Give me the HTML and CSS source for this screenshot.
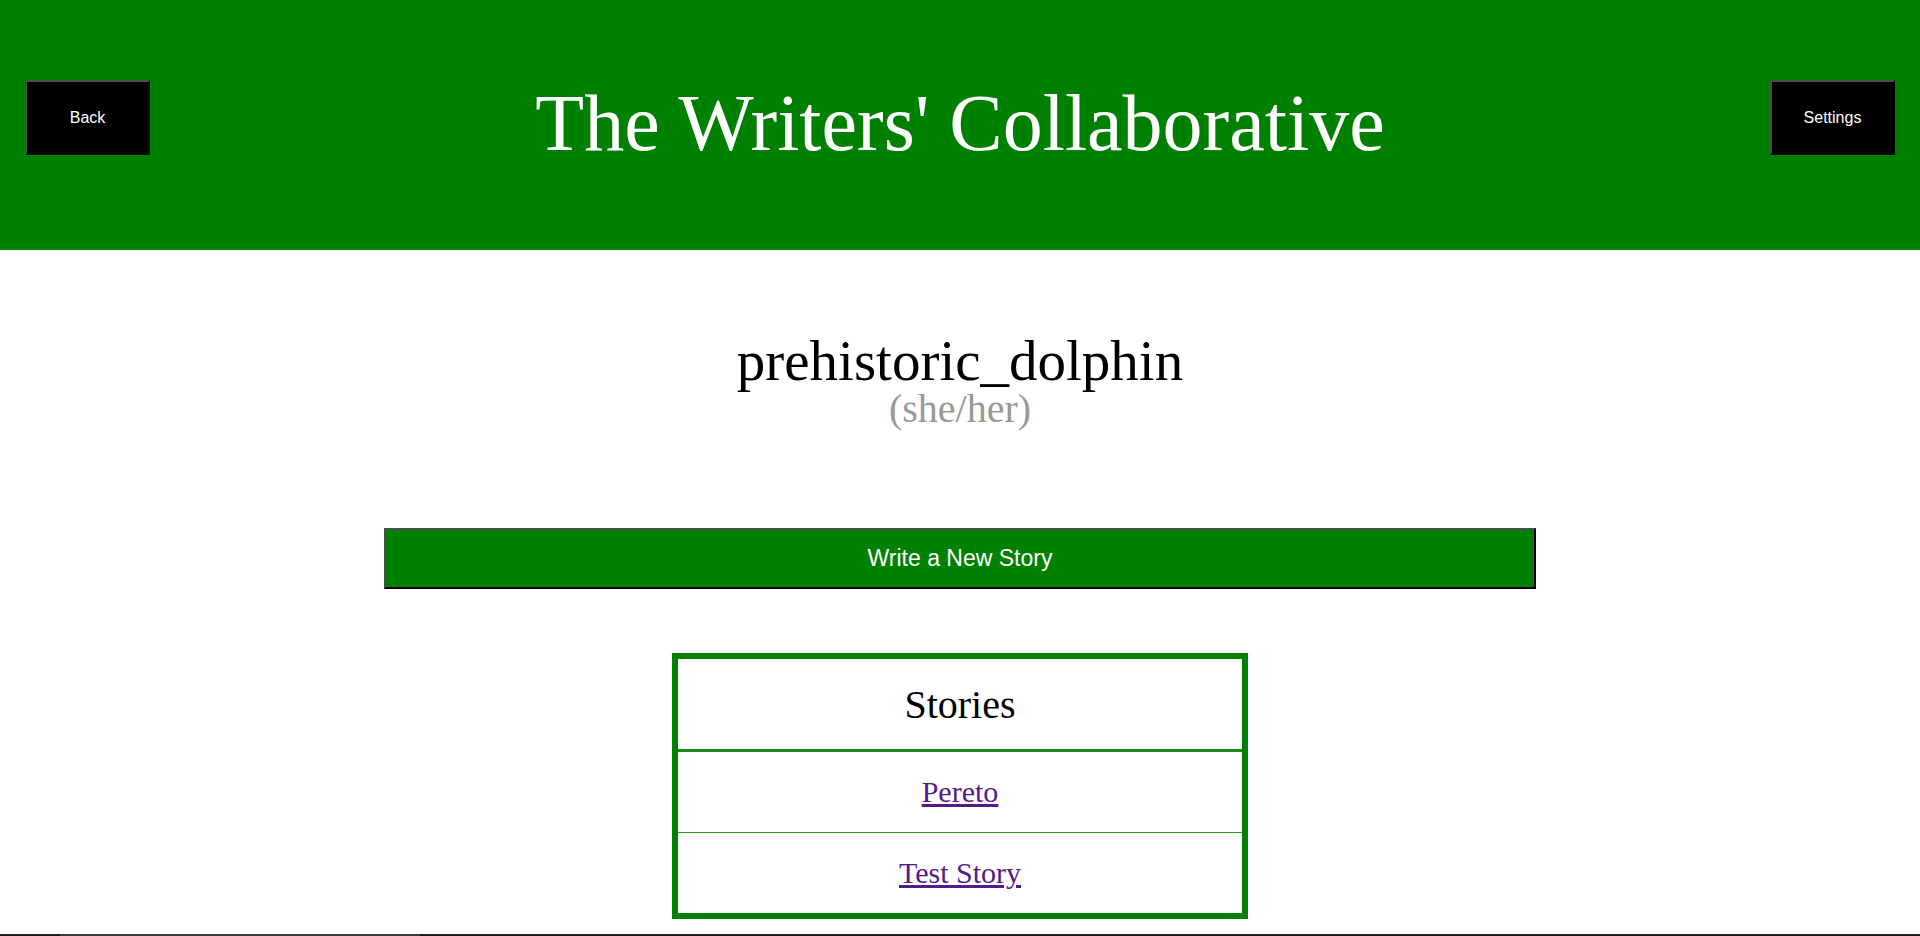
FILE: index.html
```html
<!DOCTYPE html>
<html lang="en">
<head>
<meta charset="utf-8">
<title>The Writers' Collaborative</title>
<link rel="stylesheet" href="styles.css">
</head>
<body>
<header class="site-header">
  <button class="nav-btn">Back</button>
  <h1 class="site-title">The Writers' Collaborative</h1>
  <button class="nav-btn">Settings</button>
</header>
<main class="profile">
  <div class="username">prehistoric_dolphin</div>
  <div class="pronouns">(she/her)</div>
  <button class="new-story">Write a New Story</button>
  <section class="stories">
    <div class="stories-head">Stories</div>
    <div class="story-row"><a href="#" class="story-link">Pereto</a></div>
    <div class="story-row"><a href="#" class="story-link">Test Story</a></div>
  </section>
</main>
<div class="hscroll"><div class="hscroll-thumb"></div></div>
</body>
</html>
```

FILE: styles.css
```css
html, body {
  margin: 0;
  padding: 0;
  background: #fff;
  font-family: "Liberation Serif", "Times New Roman", serif;
}

.site-header {
  background: #008000;
  height: 250px;
  box-sizing: border-box;
  padding: 0 25px;
  display: flex;
  align-items: flex-start;
  justify-content: space-between;
}

.nav-btn {
  width: 125px;
  height: 75px;
  margin-top: 80px;
  background: #000;
  color: #fff;
  font-family: "Liberation Sans", Arial, sans-serif;
  font-size: 16px;
  border-style: solid;
  border-width: 2px;
  border-color: #4d4d4d #000 #000 #4d4d4d;
  padding: 0;
  cursor: pointer;
}

.site-title {
  flex: 1;
  margin: 77px 0 0 0;
  text-align: center;
  color: #fff;
  font-weight: normal;
  font-size: 80px;
  line-height: 92px;
}

.profile {
  display: flex;
  flex-direction: column;
  align-items: center;
}

.username {
  margin-top: 82px;
  font-size: 57px;
  line-height: 1;
  color: #000;
}

.pronouns {
  margin-top: 0;
  font-size: 40px;
  line-height: 1;
  color: #999;
}

.new-story {
  margin-top: 99px;
  width: 1152px;
  height: 61px;
  background: #008000;
  color: #fff;
  font-family: "Liberation Sans", Arial, sans-serif;
  font-size: 23px;
  border-style: solid;
  border-width: 2px;
  border-color: #4d4d4d #000 #000 #4d4d4d;
  padding: 0;
  cursor: pointer;
}

.stories {
  margin-top: 64px;
  width: 576px;
  box-sizing: border-box;
  border: 6px solid #008000;
  display: flex;
  flex-direction: column;
}

.stories-head {
  height: 90px;
  border-bottom: 3px solid #1a8a1a;
  display: flex;
  align-items: center;
  justify-content: center;
  font-size: 40px;
  color: #000;
}

.story-row {
  height: 80px;
  display: flex;
  align-items: center;
  justify-content: center;
  font-size: 30px;
}

.story-row + .story-row {
  border-top: 1px solid #2b9a2b;
}

.story-link {
  color: #551a8b;
  text-decoration: underline;
}

.hscroll {
  position: fixed;
  left: 0;
  right: 0;
  bottom: 0;
  height: 2px;
  background: #1e1e1e;
}

.hscroll-thumb {
  margin-left: 60px;
  width: 360px;
  height: 2px;
  background: #3c3c3c;
}
```
